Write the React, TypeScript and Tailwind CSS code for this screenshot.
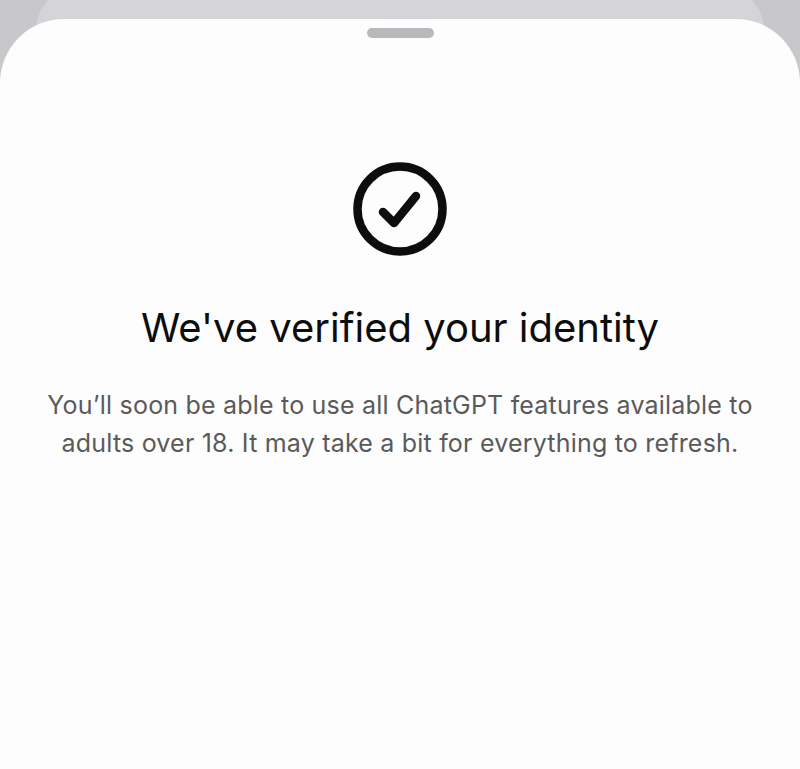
import React from "react";

const CheckCircle: React.FC = () => (
  <svg width="96" height="96" viewBox="0 0 96 96" fill="none">
    <circle cx="48" cy="48" r="42.5" stroke="#0d0d0d" strokeWidth="8.5" />
    <path
      d="M31 51 L42 62 L64 35"
      stroke="#0d0d0d"
      strokeWidth="8.5"
      strokeLinecap="round"
      strokeLinejoin="round"
    />
  </svg>
);

export default function App() {
  return (
    <div className="h-[769px] w-full overflow-hidden bg-[#c8c8ca] font-['Inter','Liberation_Sans',sans-serif]">
      {/* sheet behind */}
      <div className="mx-[36px] -mt-[14px] rounded-t-[44px] bg-[#d4d4d9] pt-[33px]">
        {/* front sheet */}
        <div className="-mx-[36px] flex h-[800px] flex-col items-center rounded-t-[64px] bg-[#fdfdfd]">
          <div className="mt-[9px] h-[10px] w-[67px] rounded-full bg-[#b9b9bb]" />
          <div className="mt-[123px]">
            <CheckCircle />
          </div>
          <h1 className="mt-[47px] text-[40px] leading-[48px] font-normal tracking-[0px] text-[#0d0d0d]">
            We've verified your identity
          </h1>
          <p className="mt-[34px] text-center text-[25px] leading-[38px] tracking-[0.2px] text-[#5a5a5a]">
            You’ll soon be able to use all ChatGPT features available to
            <br />
            adults over 18. It may take a bit for everything to refresh.
          </p>
        </div>
      </div>
    </div>
  );
}
